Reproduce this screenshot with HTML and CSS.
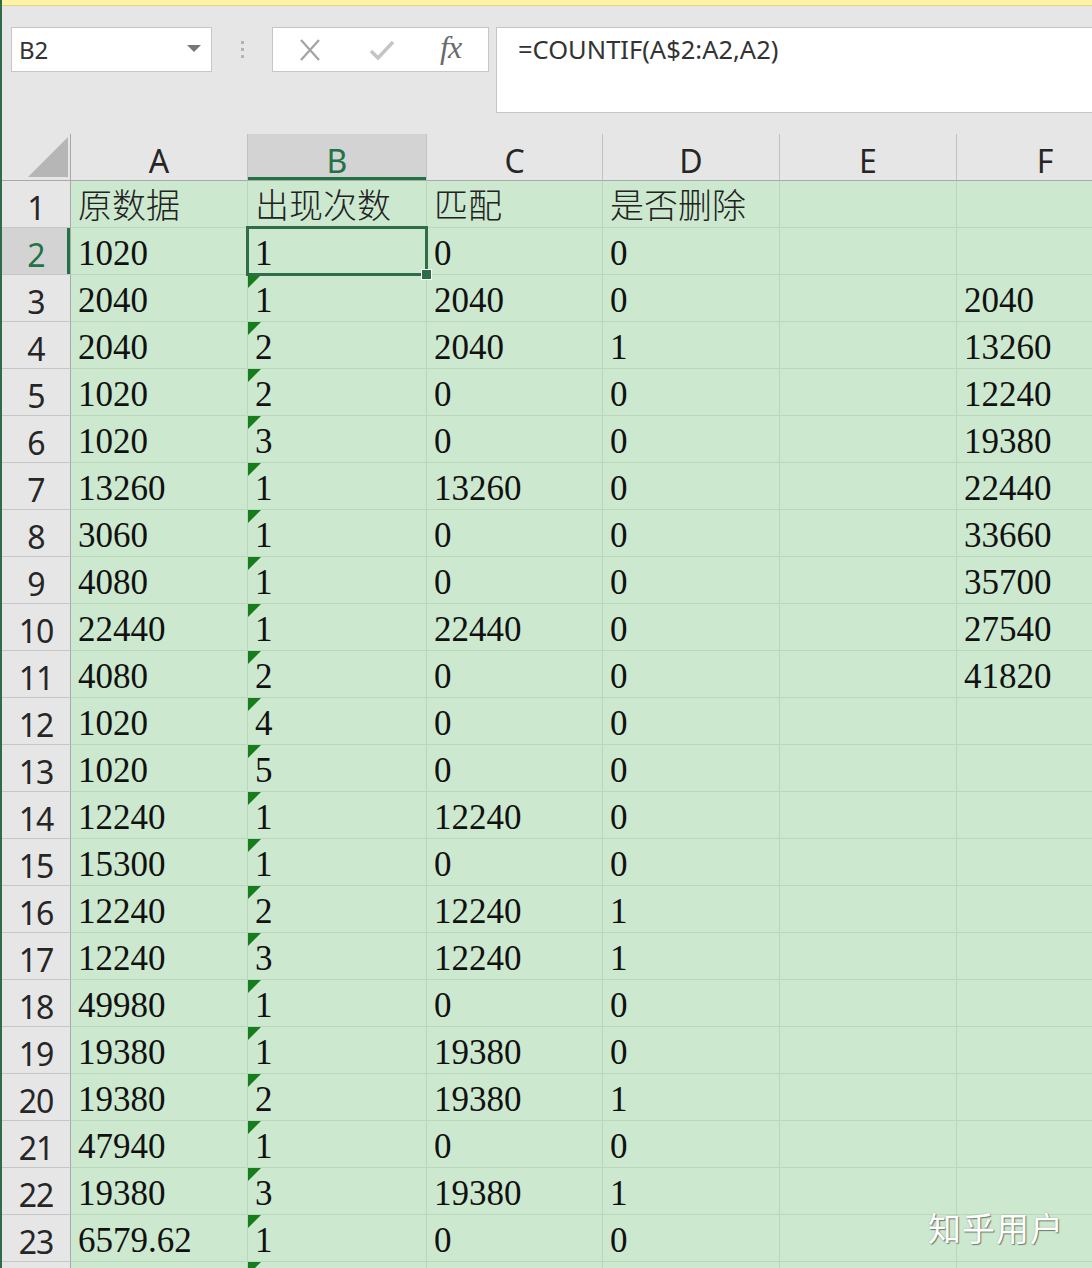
FILE: index.html
```html
<!DOCTYPE html>
<html lang="zh-CN">
<head>
<meta charset="utf-8">
<title>Excel COUNTIF</title>
<link rel="stylesheet" href="styles.css">
</head>
<body>
<div class="app">
  <div class="notice"></div>
  <div class="toolbar">
    <div class="namebox"><span class="nb-text">B2</span><span class="nb-arrow"></span></div>
    <div class="grip"><i></i><i></i><i></i></div>
    <div class="btnbox">
      <svg class="ico-x" width="24" height="22" viewBox="0 0 24 22"><path d="M3 1 L21 21 M21 1 L3 21" stroke="#a3a3a3" stroke-width="2.2" fill="none"/></svg>
      <svg class="ico-ok" width="26" height="22" viewBox="0 0 26 22"><path d="M2 12 L9 19 L24 3" stroke="#c4c4c4" stroke-width="3.4" fill="none"/></svg>
      <span class="fx">fx</span>
    </div>
    <div class="formula">=COUNTIF(A$2:A2,A2)</div>
  </div>
  <div class="sheet">
    <div class="corner"><span class="corner-tri"></span></div>
    <div class="ch">A</div><div class="ch sel">B</div><div class="ch">C</div><div class="ch">D</div><div class="ch">E</div><div class="ch">F</div>

    <div class="rh">1</div><div class="c cjk">原数据</div><div class="c cjk">出现次数</div><div class="c cjk">匹配</div><div class="c cjk">是否删除</div><div class="c"></div><div class="c"></div>
    <div class="rh sel">2</div><div class="c">1020</div><div class="c active">1</div><div class="c">0</div><div class="c">0</div><div class="c"></div><div class="c"></div>
    <div class="rh">3</div><div class="c">2040</div><div class="c tri">1</div><div class="c">2040</div><div class="c">0</div><div class="c"></div><div class="c">2040</div>
    <div class="rh">4</div><div class="c">2040</div><div class="c tri">2</div><div class="c">2040</div><div class="c">1</div><div class="c"></div><div class="c">13260</div>
    <div class="rh">5</div><div class="c">1020</div><div class="c tri">2</div><div class="c">0</div><div class="c">0</div><div class="c"></div><div class="c">12240</div>
    <div class="rh">6</div><div class="c">1020</div><div class="c tri">3</div><div class="c">0</div><div class="c">0</div><div class="c"></div><div class="c">19380</div>
    <div class="rh">7</div><div class="c">13260</div><div class="c tri">1</div><div class="c">13260</div><div class="c">0</div><div class="c"></div><div class="c">22440</div>
    <div class="rh">8</div><div class="c">3060</div><div class="c tri">1</div><div class="c">0</div><div class="c">0</div><div class="c"></div><div class="c">33660</div>
    <div class="rh">9</div><div class="c">4080</div><div class="c tri">1</div><div class="c">0</div><div class="c">0</div><div class="c"></div><div class="c">35700</div>
    <div class="rh">10</div><div class="c">22440</div><div class="c tri">1</div><div class="c">22440</div><div class="c">0</div><div class="c"></div><div class="c">27540</div>
    <div class="rh">11</div><div class="c">4080</div><div class="c tri">2</div><div class="c">0</div><div class="c">0</div><div class="c"></div><div class="c">41820</div>
    <div class="rh">12</div><div class="c">1020</div><div class="c tri">4</div><div class="c">0</div><div class="c">0</div><div class="c"></div><div class="c"></div>
    <div class="rh">13</div><div class="c">1020</div><div class="c tri">5</div><div class="c">0</div><div class="c">0</div><div class="c"></div><div class="c"></div>
    <div class="rh">14</div><div class="c">12240</div><div class="c tri">1</div><div class="c">12240</div><div class="c">0</div><div class="c"></div><div class="c"></div>
    <div class="rh">15</div><div class="c">15300</div><div class="c tri">1</div><div class="c">0</div><div class="c">0</div><div class="c"></div><div class="c"></div>
    <div class="rh">16</div><div class="c">12240</div><div class="c tri">2</div><div class="c">12240</div><div class="c">1</div><div class="c"></div><div class="c"></div>
    <div class="rh">17</div><div class="c">12240</div><div class="c tri">3</div><div class="c">12240</div><div class="c">1</div><div class="c"></div><div class="c"></div>
    <div class="rh">18</div><div class="c">49980</div><div class="c tri">1</div><div class="c">0</div><div class="c">0</div><div class="c"></div><div class="c"></div>
    <div class="rh">19</div><div class="c">19380</div><div class="c tri">1</div><div class="c">19380</div><div class="c">0</div><div class="c"></div><div class="c"></div>
    <div class="rh">20</div><div class="c">19380</div><div class="c tri">2</div><div class="c">19380</div><div class="c">1</div><div class="c"></div><div class="c"></div>
    <div class="rh">21</div><div class="c">47940</div><div class="c tri">1</div><div class="c">0</div><div class="c">0</div><div class="c"></div><div class="c"></div>
    <div class="rh">22</div><div class="c">19380</div><div class="c tri">3</div><div class="c">19380</div><div class="c">1</div><div class="c"></div><div class="c"></div>
    <div class="rh">23</div><div class="c">6579.62</div><div class="c tri">1</div><div class="c">0</div><div class="c">0</div><div class="c"></div><div class="c"></div>
    <div class="rh"></div><div class="c"></div><div class="c tri"></div><div class="c"></div><div class="c"></div><div class="c"></div><div class="c"></div>
  </div>
  <div class="watermark">知乎用户</div>
</div>
</body>
</html>
```
FILE: styles.css
```css
* { box-sizing: border-box; }
html, body { margin: 0; padding: 0; }
body {
  width: 1092px;
  height: 1268px;
  overflow: hidden;
  background: #e6e6e6;
}
.app {
  position: relative;
  height: 1268px;
  border-left: 2px solid #2f6b47;
  background: #e6e6e6;
  overflow: hidden;
}
.notice {
  height: 6px;
  background: #fcf3a9;
  border-bottom: 1px solid #e3d67c;
}
.toolbar {
  height: 128px;
  display: flex;
  align-items: flex-start;
  padding: 21px 0 0 9px;
}
.namebox {
  width: 201px;
  height: 45px;
  background: #fff;
  border: 1px solid #c6c6c6;
  display: flex;
  align-items: center;
  justify-content: space-between;
  padding: 0 10px 0 7px;
}
.nb-text {
  font-family: "Noto Sans", "Open Sans", sans-serif;
  font-size: 24px;
  color: #333;
}
.nb-arrow {
  width: 0; height: 0;
  border-left: 7px solid transparent;
  border-right: 7px solid transparent;
  border-top: 7px solid #777;
  margin-top: -2px;
}
.grip {
  width: 60px;
  height: 45px;
  display: flex;
  flex-direction: column;
  align-items: center;
  justify-content: center;
  gap: 4px;
}
.grip i {
  display: block;
  width: 3px; height: 3px;
  background: #b3b3b3;
}
.btnbox {
  width: 217px;
  height: 45px;
  background: #fff;
  border: 1px solid #c6c6c6;
  display: flex;
  align-items: center;
  padding-left: 25px;
}
.ico-x { margin-right: 47px; }
.ico-ok { margin-right: 45px; }
.fx {
  font-family: "Liberation Serif", "Times New Roman", serif;
  font-style: italic;
  font-size: 32px;
  color: #6a6a6a;
  margin-top: -4px;
  letter-spacing: -1px;
}
.formula {
  flex: 1;
  margin-left: 7px;
  height: 86px;
  background: #fff;
  border: 1px solid #c6c6c6;
  border-right: none;
  padding: 4px 0 0 21px;
  font-family: "Noto Sans", "Open Sans", sans-serif;
  font-size: 25.5px;
  color: #333;
}
.sheet {
  display: grid;
  grid-template-columns: 69px 177px 179px 176px 177px 177px 177px;
  grid-template-rows: 47px;
  grid-auto-rows: 47px;
  width: 1132px;
  background: #cce8cf;
}
.corner {
  background: #e6e6e6;
  border-right: 1px solid #a9a9a9;
  border-bottom: 1px solid #a9a9a9;
  position: relative;
}
.corner-tri {
  position: absolute;
  right: 2px;
  bottom: 3px;
  width: 0; height: 0;
  border-left: 40px solid transparent;
  border-bottom: 40px solid #b6b6b6;
}
.ch {
  background: #e6e6e6;
  border-right: 1px solid #c2c2c2;
  border-bottom: 1px solid #a9a9a9;
  font-family: "Noto Sans", "Open Sans", sans-serif;
  font-size: 32px;
  color: #262626;
  text-align: center;
  line-height: 54px;
}
.ch.sel {
  background: #d3d3d3;
  color: #217346;
  box-shadow: inset 0 -3px 0 #217346;
}
.rh {
  background: #e6e6e6;
  border-right: 1px solid #a9a9a9;
  border-bottom: 1px solid #c6c6c6;
  font-family: "Noto Sans", "Open Sans", sans-serif;
  font-size: 32px;
  color: #262626;
  text-align: center;
  line-height: 53px;
  letter-spacing: -1px;
}
.rh.sel {
  background: #d3d3d3;
  color: #217346;
  box-shadow: inset -3px 0 0 #217346;
}
.c {
  position: relative;
  border-right: 1px solid #bad7be;
  border-bottom: 1px solid #bad7be;
  padding: 6px 0 0 7px;
  font-family: "Liberation Serif", "Times New Roman", serif;
  font-size: 35px;
  line-height: 40px;
  color: #111;
  white-space: nowrap;
}
.c.cjk {
  font-family: "Noto Sans CJK SC", "Noto Sans CJK JP", sans-serif;
  font-size: 34px;
  font-weight: 300;
  padding-top: 3px;
  color: #222;
}
.c.tri::before {
  content: "";
  position: absolute;
  left: 0;
  top: 0;
  width: 0; height: 0;
  border-top: 13px solid #177d1c;
  border-right: 13px solid transparent;
}
.c.active::after {
  content: "";
  position: absolute;
  left: -2px;
  top: -2px;
  right: -2px;
  bottom: -2px;
  border: 3px solid #2f6c48;
  z-index: 2;
}
.c.active::before {
  content: "";
  position: absolute;
  right: -6px;
  bottom: -6px;
  width: 9px;
  height: 9px;
  background: #2f6c48;
  border: 1px solid #fff;
  z-index: 3;
}
.watermark {
  position: absolute;
  left: 926px;
  top: 1203px;
  font-family: "Noto Sans CJK SC", "Noto Sans CJK JP", sans-serif;
  font-size: 33px;
  color: #ffffff;
  text-shadow: 1px 1px 1px rgba(0,0,0,0.45), 0 0 2px rgba(0,0,0,0.2);
  letter-spacing: 1px;
}
```
